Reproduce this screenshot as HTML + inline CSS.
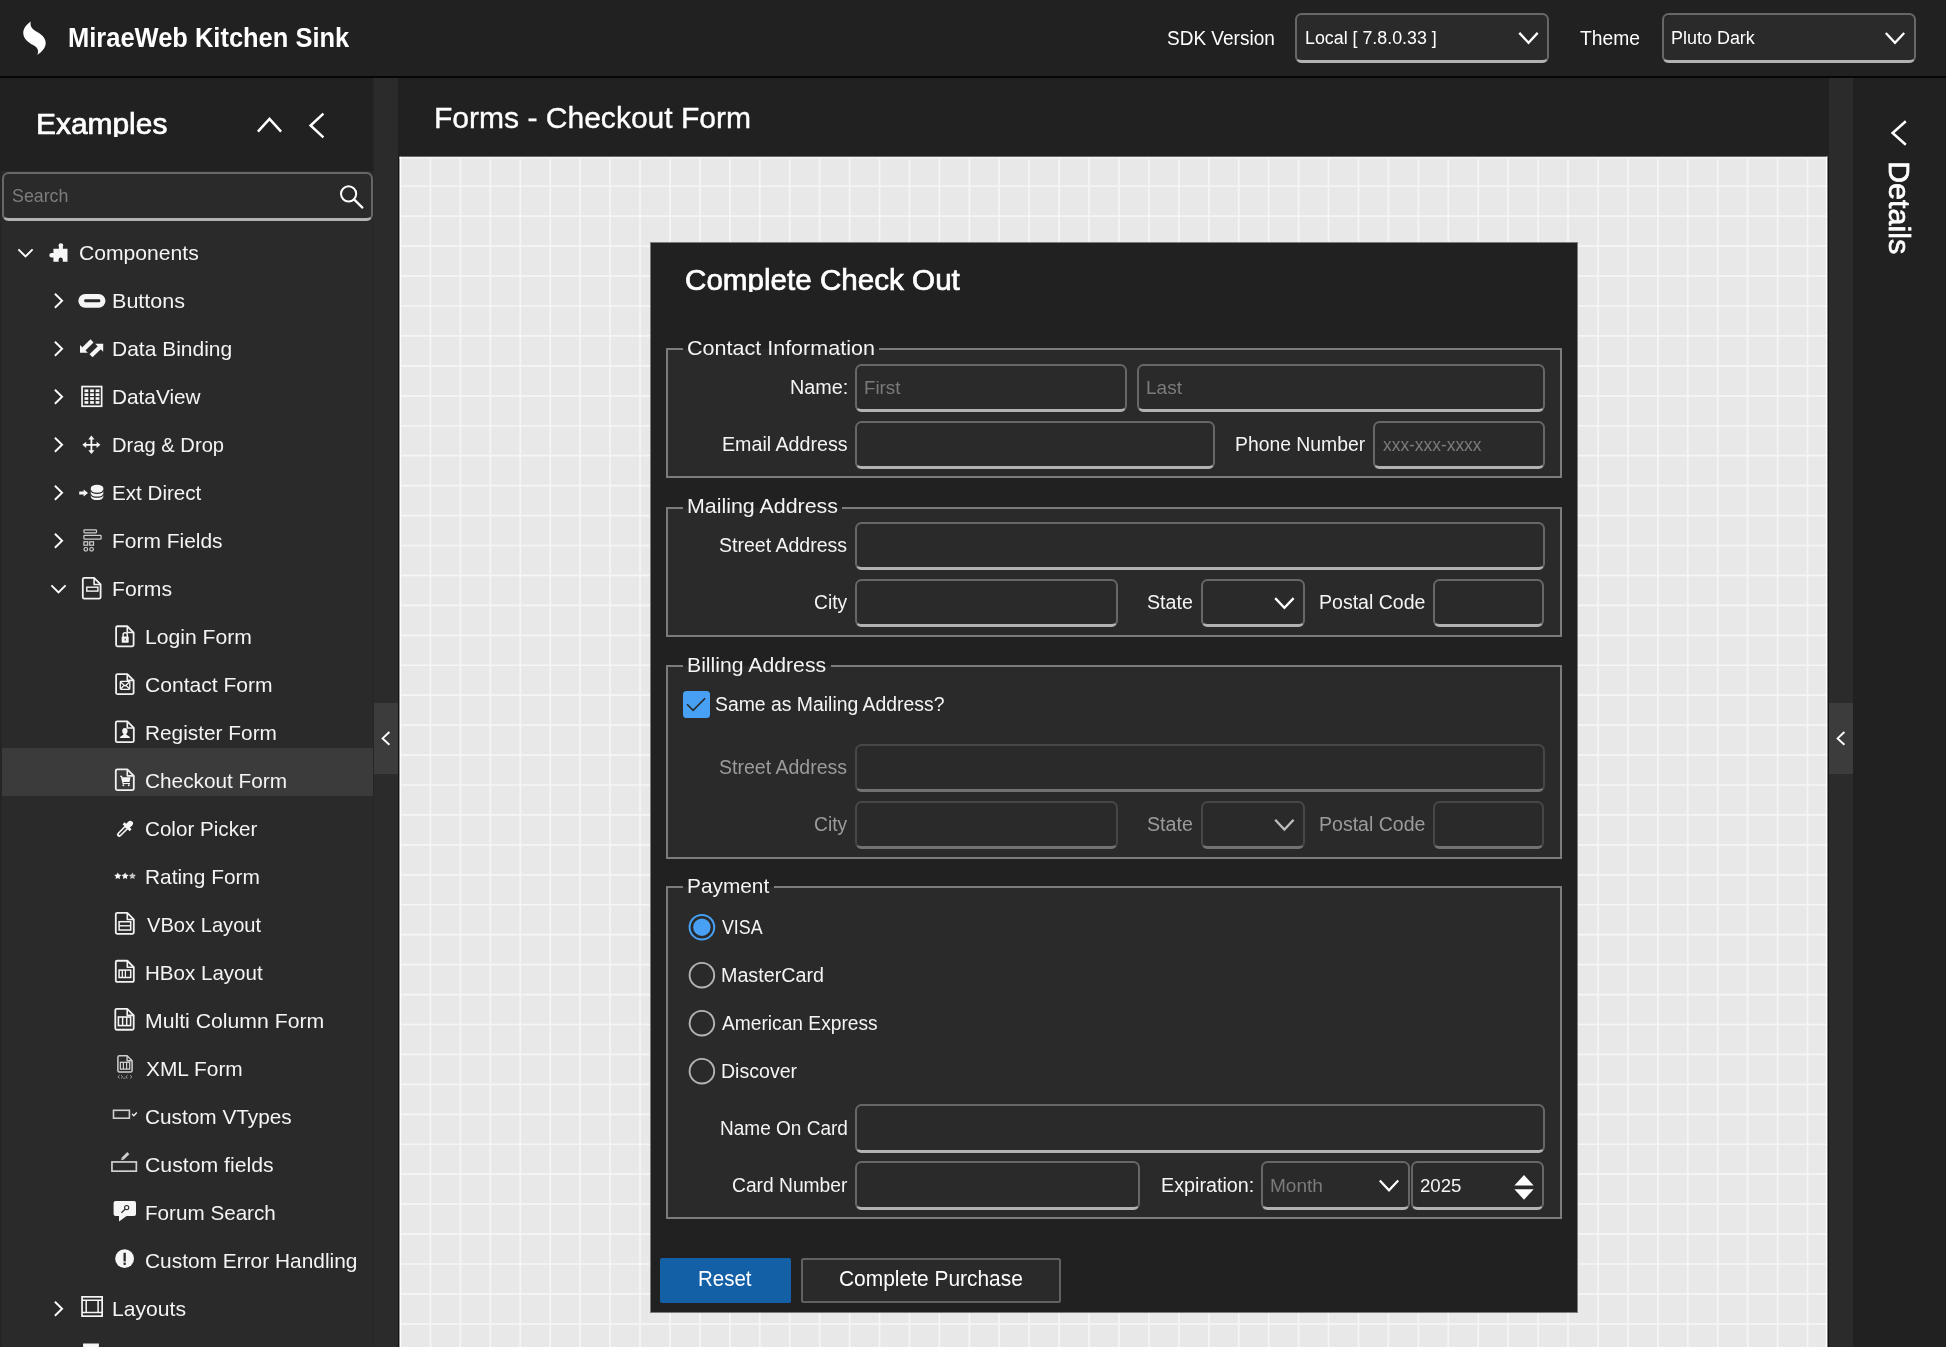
<!DOCTYPE html>
<html><head><meta charset="utf-8"><title>MiraeWeb Kitchen Sink</title>
<style>
html,body{margin:0;padding:0;background:#212121;overflow:hidden}
#r{position:relative;width:1946px;height:1347px;overflow:hidden;font-family:"Liberation Sans",sans-serif;background:#212121}
.t{position:absolute;white-space:pre;display:block;transform-origin:0 0}
.f{position:absolute;box-sizing:border-box;background:#2a2a2a;border:2px solid #676767;border-bottom:3px solid #b2b2b2;border-radius:6.5px}
svg{position:absolute;left:0;top:0}
#tx{position:absolute;left:0;top:0;width:1946px;height:1347px;will-change:transform}
</style></head><body><div id="r">
<div style="position:absolute;left:0px;top:0px;width:1946px;height:76px;background:#212121"></div>
<div style="position:absolute;left:0px;top:76px;width:1946px;height:2px;background:#060606"></div>
<div style="position:absolute;left:0px;top:78px;width:374px;height:93px;background:#212121"></div>
<div style="position:absolute;left:0px;top:171px;width:374px;height:1176px;background:#2a2a2a"></div>
<div style="position:absolute;left:0px;top:171px;width:2px;height:1176px;background:#252525"></div>
<div style="position:absolute;left:372.5px;top:78px;width:1.5px;height:1269px;background:#262626"></div>
<div style="position:absolute;left:374px;top:78px;width:24px;height:1269px;background:#2b2b2b"></div>
<div style="position:absolute;left:374.3px;top:702.8px;width:23.7px;height:71.7px;background:#3c3c3c"></div>
<div style="position:absolute;left:398px;top:78px;width:1431px;height:78.5px;background:#212121"></div>
<div style="position:absolute;left:398px;top:156.5px;width:1431px;height:1190.5px;background:#131313"></div>
<svg width="1946" height="1347" viewBox="0 0 1946 1347"><rect x="399.6" y="156.8" width="1428.7" height="1191" fill="#e8e8e8"/><path d="M430.45 157V1347M460.39 157V1347M490.32 157V1347M520.26 157V1347M550.20 157V1347M580.13 157V1347M610.07 157V1347M640.01 157V1347M669.95 157V1347M699.88 157V1347M729.82 157V1347M759.76 157V1347M789.69 157V1347M819.63 157V1347M849.57 157V1347M879.50 157V1347M909.44 157V1347M939.38 157V1347M969.32 157V1347M999.25 157V1347M1029.19 157V1347M1059.13 157V1347M1089.06 157V1347M1119.00 157V1347M1148.94 157V1347M1178.88 157V1347M1208.81 157V1347M1238.75 157V1347M1268.69 157V1347M1298.62 157V1347M1328.56 157V1347M1358.50 157V1347M1388.43 157V1347M1418.37 157V1347M1448.31 157V1347M1478.25 157V1347M1508.18 157V1347M1538.12 157V1347M1568.06 157V1347M1597.99 157V1347M1627.93 157V1347M1657.87 157V1347M1687.80 157V1347M1717.74 157V1347M1747.68 157V1347M1777.62 157V1347M1807.55 157V1347M400 186.25H1828M400 216.19H1828M400 246.12H1828M400 276.06H1828M400 306.00H1828M400 335.94H1828M400 365.87H1828M400 395.81H1828M400 425.75H1828M400 455.68H1828M400 485.62H1828M400 515.56H1828M400 545.49H1828M400 575.43H1828M400 605.37H1828M400 635.31H1828M400 665.24H1828M400 695.18H1828M400 725.12H1828M400 755.05H1828M400 784.99H1828M400 814.93H1828M400 844.86H1828M400 874.80H1828M400 904.74H1828M400 934.68H1828M400 964.61H1828M400 994.55H1828M400 1024.49H1828M400 1054.42H1828M400 1084.36H1828M400 1114.30H1828M400 1144.23H1828M400 1174.17H1828M400 1204.11H1828M400 1234.05H1828M400 1263.98H1828M400 1293.92H1828M400 1323.86H1828" stroke="#f5f5f5" stroke-width="1.7" fill="none"/><rect x="399.6" y="156.8" width="1428.7" height="2.2" fill="#f1f1f1"/><rect x="399.7" y="156.8" width="1.5" height="1191" fill="#fdfdfd"/><rect x="1825.8" y="156.8" width="1.5" height="1191" fill="#fbfbfb"/><rect x="1827.5" y="156.8" width="1.6" height="1191" fill="#111"/></svg>
<div style="position:absolute;left:1829px;top:78px;width:24px;height:1269px;background:#2b2b2b"></div>
<div style="position:absolute;left:1829.1px;top:702.8px;width:23.9px;height:71.7px;background:#3c3c3c"></div>
<div style="position:absolute;left:1853px;top:78px;width:93px;height:1269px;background:#212121"></div>
<div class="f" style="left:1295px;top:13.4px;width:253.7px;height:49.2px;border-color:#676767;border-bottom-color:#b2b2b2"></div>
<div class="f" style="left:1662px;top:13.4px;width:253.9px;height:49.2px;border-color:#676767;border-bottom-color:#b2b2b2"></div>
<div class="f" style="left:2px;top:172.3px;width:370.5px;height:49px;border-color:#676767;border-bottom-color:#b2b2b2"></div>
<div style="position:absolute;left:2px;top:748px;width:371px;height:48px;background:#3b3b3b"></div>
<div style="position:absolute;left:649.5px;top:241.5px;width:928.5px;height:1071px;background:#7e7b7a"></div>
<div style="position:absolute;left:650.5px;top:242.5px;width:926.5px;height:1069px;background:#212121"></div>
<div style="position:absolute;left:666px;top:348.4px;width:895.5px;height:129.4px;background:#2a2a2a;border:2px solid #7c7c7c;box-sizing:border-box"></div>
<div style="position:absolute;left:682.5px;top:346.4px;width:196.8px;height:6px;background:#212121"></div>
<div style="position:absolute;left:682.5px;top:349.4px;width:196.8px;height:12px;background:#2a2a2a"></div>
<div class="f" style="left:855px;top:364px;width:272px;height:48px;border-color:#676767;border-bottom-color:#b2b2b2"></div>
<div class="f" style="left:1136.5px;top:364px;width:408px;height:48px;border-color:#676767;border-bottom-color:#b2b2b2"></div>
<div class="f" style="left:855px;top:420.5px;width:360px;height:48.3px;border-color:#676767;border-bottom-color:#b2b2b2"></div>
<div class="f" style="left:1373px;top:420.5px;width:171.5px;height:48.3px;border-color:#676767;border-bottom-color:#b2b2b2"></div>
<div style="position:absolute;left:666px;top:506.6px;width:895.5px;height:130.4px;background:#2a2a2a;border:2px solid #7c7c7c;box-sizing:border-box"></div>
<div style="position:absolute;left:682.5px;top:504.6px;width:159.8px;height:6px;background:#212121"></div>
<div style="position:absolute;left:682.5px;top:507.6px;width:159.8px;height:12px;background:#2a2a2a"></div>
<div class="f" style="left:855px;top:522.4px;width:689.5px;height:48px;border-color:#676767;border-bottom-color:#b2b2b2"></div>
<div class="f" style="left:855px;top:579.2px;width:262.5px;height:48.3px;border-color:#676767;border-bottom-color:#b2b2b2"></div>
<div class="f" style="left:1201px;top:579.2px;width:103.8px;height:48.3px;border-color:#676767;border-bottom-color:#b2b2b2"></div>
<div class="f" style="left:1433.2px;top:579.2px;width:111.3px;height:48.3px;border-color:#676767;border-bottom-color:#b2b2b2"></div>
<div style="position:absolute;left:666px;top:664.8px;width:895.5px;height:194px;background:#2a2a2a;border:2px solid #7c7c7c;box-sizing:border-box"></div>
<div style="position:absolute;left:682.5px;top:662.8px;width:148px;height:6px;background:#212121"></div>
<div style="position:absolute;left:682.5px;top:665.8px;width:148px;height:12px;background:#2a2a2a"></div>
<div style="position:absolute;left:682.6px;top:690.6px;width:27.2px;height:27.3px;background:#47a0f4;border-radius:3.5px"></div>
<div class="f" style="left:855px;top:743.6px;width:689.5px;height:48.2px;border-color:#474747;border-bottom-color:#727272"></div>
<div class="f" style="left:855px;top:800.6px;width:262.5px;height:48.5px;border-color:#474747;border-bottom-color:#727272"></div>
<div class="f" style="left:1201px;top:800.6px;width:103.8px;height:48.5px;border-color:#474747;border-bottom-color:#727272"></div>
<div class="f" style="left:1433.2px;top:800.6px;width:111.3px;height:48.5px;border-color:#474747;border-bottom-color:#727272"></div>
<div style="position:absolute;left:666px;top:886.3px;width:895.5px;height:332.9px;background:#2a2a2a;border:2px solid #7c7c7c;box-sizing:border-box"></div>
<div style="position:absolute;left:682.5px;top:884.3px;width:91.8px;height:6px;background:#212121"></div>
<div style="position:absolute;left:682.5px;top:887.3px;width:91.8px;height:12px;background:#2a2a2a"></div>
<div class="f" style="left:855px;top:1104.2px;width:689.5px;height:48.6px;border-color:#676767;border-bottom-color:#b2b2b2"></div>
<div class="f" style="left:855px;top:1161px;width:285.3px;height:48.6px;border-color:#676767;border-bottom-color:#b2b2b2"></div>
<div class="f" style="left:1261.1px;top:1161px;width:148.5px;height:48.6px;border-color:#676767;border-bottom-color:#b2b2b2"></div>
<div class="f" style="left:1410.9px;top:1161px;width:133.6px;height:48.6px;border-color:#676767;border-bottom-color:#b2b2b2"></div>
<div style="position:absolute;left:660.1px;top:1257.9px;width:131.1px;height:45px;background:#1460a6;border-radius:2px"></div>
<div style="position:absolute;left:801.1px;top:1258.1px;width:260px;height:44.6px;background:#2a2a2a;border:2px solid #616161;box-sizing:border-box;border-radius:2.5px"></div>
<svg width="1946" height="1347" viewBox="0 0 1946 1347">
<polyline points="389.4,732 382.6,738.4 389.4,744.8" fill="none" stroke="#fff" stroke-width="1.9"/>
<polyline points="1844.4,732 1837.6,738.4 1844.4,744.8" fill="none" stroke="#fff" stroke-width="1.9"/>
<path d="M30.8 21.6 C26 25 23 29 23.3 33.6 C23.7 39 28 42.5 33 45 C37 47 39.6 50.2 37.2 54.8 C42 52 45.9 47.6 45.7 42.4 C45.4 37 40 33.5 35.5 31 C31.5 28.7 29.7 25.5 30.8 21.6 Z" fill="#fff"/>
<polyline points="1519.3,32.9 1528.5,42.7 1537.7,32.9" fill="none" stroke="#fff" stroke-width="2.3"/>
<polyline points="1885.8,33 1895,42.8 1904.2,33" fill="none" stroke="#fff" stroke-width="2.3"/>
<polyline points="257.9,131.7 269.5,118.9 281.1,131.7" fill="none" stroke="#fff" stroke-width="2.5"/>
<polyline points="323.4,113.7 310.6,125.5 323.4,137.3" fill="none" stroke="#fff" stroke-width="2.5"/>
<circle cx="348.6" cy="193.8" r="7.6" fill="none" stroke="#fff" stroke-width="2"/>
<path d="M354 199.4 L362.4 207.6" stroke="#fff" stroke-width="2.2" stroke-linecap="round"/>
<polyline points="18.4,249.3 25.5,256.5 32.6,249.3" fill="none" stroke="#fff" stroke-width="1.9"/>
<polyline points="54.9,293.7 62.1,300.7 54.9,307.7" fill="none" stroke="#fff" stroke-width="1.9"/>
<polyline points="54.9,341.7 62.1,348.7 54.9,355.7" fill="none" stroke="#fff" stroke-width="1.9"/>
<polyline points="54.9,389.7 62.1,396.7 54.9,403.7" fill="none" stroke="#fff" stroke-width="1.9"/>
<polyline points="54.9,437.7 62.1,444.7 54.9,451.7" fill="none" stroke="#fff" stroke-width="1.9"/>
<polyline points="54.9,485.7 62.1,492.7 54.9,499.7" fill="none" stroke="#fff" stroke-width="1.9"/>
<polyline points="54.9,533.7 62.1,540.7 54.9,547.7" fill="none" stroke="#fff" stroke-width="1.9"/>
<polyline points="51.4,585.3 58.5,592.5 65.6,585.3" fill="none" stroke="#fff" stroke-width="1.9"/>
<polyline points="54.9,1301.7 62.1,1308.7 54.9,1315.7" fill="none" stroke="#fff" stroke-width="1.9"/>
<polyline points="54.9,1349.7 62.1,1356.7 54.9,1363.7" fill="none" stroke="#fff" stroke-width="1.9"/>
<path fill="#f6f6f6" d="M53.4 248.7 H58.9 V246.6 A2.3 2.3 0 1 1 62.9 246.6 V248.7 H67.5 V261.7 H62.8 V259.6 A2.1 2.1 0 0 0 58.6 259.6 V261.7 H53.4 V257.6 H51.6 A2.3 2.3 0 1 1 51.6 253 H53.4 Z"/>
<rect x="78.3" y="293.9" width="27.2" height="13.9" rx="6.95" fill="#f6f6f6"/>
<rect x="84.2" y="299.3" width="16.1" height="2.9" rx="1.2" fill="#2a2a2a"/>
<path fill="#f6f6f6" d="M80 345 V352.8 H87.8 Z"/>
<path d="M83.4 349.4 L92 340.9" stroke="#f6f6f6" stroke-width="4.3"/>
<path fill="#f6f6f6" d="M103.2 343.8 H95.2 L103.2 351.8 Z"/>
<path d="M99.8 347.2 L91 355.8" stroke="#f6f6f6" stroke-width="4.3"/>
<rect x="82.05" y="386.55" width="19.6" height="19.7" fill="none" stroke="#f6f6f6" stroke-width="1.7"/>
<rect x="84.5" y="389.4" width="3.8" height="2.7" fill="#f6f6f6"/>
<rect x="84.5" y="393.3" width="3.8" height="2.7" fill="#f6f6f6"/>
<rect x="84.5" y="397.2" width="3.8" height="2.7" fill="#f6f6f6"/>
<rect x="84.5" y="401.1" width="3.8" height="2.7" fill="#f6f6f6"/>
<rect x="90.1" y="389.4" width="3.8" height="2.7" fill="#f6f6f6"/>
<rect x="90.1" y="393.3" width="3.8" height="2.7" fill="#f6f6f6"/>
<rect x="90.1" y="397.2" width="3.8" height="2.7" fill="#f6f6f6"/>
<rect x="90.1" y="401.1" width="3.8" height="2.7" fill="#f6f6f6"/>
<rect x="95.6" y="389.4" width="3.8" height="2.7" fill="#f6f6f6"/>
<rect x="95.6" y="393.3" width="3.8" height="2.7" fill="#f6f6f6"/>
<rect x="95.6" y="397.2" width="3.8" height="2.7" fill="#f6f6f6"/>
<rect x="95.6" y="401.1" width="3.8" height="2.7" fill="#f6f6f6"/>
<path d="M91.4 438 V451.6 M84.6 444.8 H98.2" stroke="#f6f6f6" stroke-width="1.8"/>
<path fill="#f6f6f6" d="M91.4 435.6 L94.5 439.4 H88.3 Z M91.4 454 L94.5 450.2 H88.3 Z M82.4 444.8 L86.2 441.7 V447.9 Z M100.4 444.8 L96.6 441.7 V447.9 Z"/>
<path fill="#f6f6f6" d="M79.2 491.4 H83.6 V489.4 L88 492.9 L83.6 496.4 V494.4 H79.2 Z"/>
<path fill="#f6f6f6" d="M90.8 488 A6.25 3.3 0 0 1 103.3 488 V496.8 A6.25 3.3 0 0 1 90.8 496.8 Z"/>
<path fill="none" stroke="#2a2a2a" stroke-width="1.3" d="M90.8 490.3 A6.25 3 0 0 0 103.3 490.3 M90.8 494.2 A6.25 3 0 0 0 103.3 494.2"/>
<rect x="83.9" y="529.9" width="12.6" height="3" rx=".8" fill="none" stroke="#cfcfcf" stroke-width="1.2"/>
<rect x="83.9" y="535.3" width="17.2" height="3.9" rx=".8" fill="none" stroke="#cfcfcf" stroke-width="1.2"/>
<rect x="83.9" y="541.8" width="3.8" height="3.4" fill="none" stroke="#cfcfcf" stroke-width="1.2"/>
<rect x="89.7" y="541.8" width="3.8" height="3.4" fill="none" stroke="#cfcfcf" stroke-width="1.2"/>
<circle cx="85.8" cy="549.3" r="1.8" fill="none" stroke="#cfcfcf" stroke-width="1.2"/>
<circle cx="91.6" cy="549.3" r="1.8" fill="none" stroke="#cfcfcf" stroke-width="1.2"/>
<path d="M84.3 577.95 h9.8 l6.5 6.5 v12.7 a1.5 1.5 0 0 1 -1.5 1.5 h-14.8 a1.5 1.5 0 0 1 -1.5 -1.5 v-17.7 a1.5 1.5 0 0 1 1.5 -1.5 z" fill="none" stroke="#f2f2f2" stroke-width="1.8" stroke-linejoin="round"/>
<path d="M94.1 577.95 v6.5 h6.5" fill="none" stroke="#f2f2f2" stroke-width="1.62" stroke-linejoin="round"/>
<rect x="86.8" y="587.2" width="11.1" height="3.9" fill="none" stroke="#f6f6f6" stroke-width="1.4"/>
<path d="M117.6 626.25 h9.7 l6.3 6.3 v12.3 a1.5 1.5 0 0 1 -1.5 1.5 h-14.5 a1.5 1.5 0 0 1 -1.5 -1.5 v-17.1 a1.5 1.5 0 0 1 1.5 -1.5 z" fill="none" stroke="#f2f2f2" stroke-width="1.8" stroke-linejoin="round"/>
<path d="M127.3 626.25 v6.3 h6.3" fill="none" stroke="#f2f2f2" stroke-width="1.62" stroke-linejoin="round"/>
<rect x="121.7" y="636.5" width="7" height="6.2" rx=".6" fill="#f6f6f6"/>
<path d="M123.1 637 V634.9 A2.1 2.1 0 0 1 127.3 634.9 V637" fill="none" stroke="#f6f6f6" stroke-width="1.4"/>
<rect x="124.7" y="638.6" width="1" height="2" fill="#2a2a2a"/>
<path d="M117.6 674.05 h9.7 l6.3 6.3 v12.3 a1.5 1.5 0 0 1 -1.5 1.5 h-14.5 a1.5 1.5 0 0 1 -1.5 -1.5 v-17.1 a1.5 1.5 0 0 1 1.5 -1.5 z" fill="none" stroke="#f2f2f2" stroke-width="1.8" stroke-linejoin="round"/>
<path d="M127.3 674.05 v6.3 h6.3" fill="none" stroke="#f2f2f2" stroke-width="1.62" stroke-linejoin="round"/>
<rect x="120.3" y="681.4" width="9.5" height="8" rx=".8" fill="none" stroke="#f6f6f6" stroke-width="1.3"/>
<path d="M120.8 682.2 L125.05 686 L129.3 682.2 M120.8 688.8 L123.8 685.6 M129.3 688.8 L126.3 685.6" fill="none" stroke="#f6f6f6" stroke-width="1.25"/>
<path d="M117.3 721.45 h10 l6.5 6.5 v12.7 a1.5 1.5 0 0 1 -1.5 1.5 h-15 a1.5 1.5 0 0 1 -1.5 -1.5 v-17.7 a1.5 1.5 0 0 1 1.5 -1.5 z" fill="none" stroke="#f2f2f2" stroke-width="1.8" stroke-linejoin="round"/>
<path d="M127.3 721.45 v6.5 h6.5" fill="none" stroke="#f2f2f2" stroke-width="1.62" stroke-linejoin="round"/>
<ellipse cx="124.9" cy="731" rx="2.7" ry="3.1" fill="#f6f6f6"/>
<path fill="#f6f6f6" d="M119.7 738 C120.5 735.6 123 735.8 123.8 734 H126 C126.8 735.8 129.4 735.6 130.2 738 Z"/>
<path d="M117.3 769.35 h10 l6.5 6.5 v12.7 a1.5 1.5 0 0 1 -1.5 1.5 h-15 a1.5 1.5 0 0 1 -1.5 -1.5 v-17.7 a1.5 1.5 0 0 1 1.5 -1.5 z" fill="none" stroke="#f2f2f2" stroke-width="1.8" stroke-linejoin="round"/>
<path d="M127.3 769.35 v6.5 h6.5" fill="none" stroke="#f2f2f2" stroke-width="1.62" stroke-linejoin="round"/>
<path fill="#f6f6f6" d="M120 775.8 H122 L122.5 777.3 H130.5 L129.6 782 H123.3 L123.6 783 H130 V783.9 H122.6 L120.9 776.8 H120 Z"/>
<circle cx="123.4" cy="785.3" r=".95" fill="#f6f6f6"/><circle cx="128.8" cy="785.3" r=".95" fill="#f6f6f6"/>
<path d="M119.2 834.6 L126.3 827.5" stroke="#f6f6f6" stroke-width="4.6" stroke-linecap="round"/>
<path d="M119.6 834.2 L126.2 827.6" stroke="#2a2a2a" stroke-width="1.6" stroke-linecap="round"/>
<path d="M123.6 823.2 L130.6 830.2" stroke="#f6f6f6" stroke-width="2.8"/>
<path d="M127.6 826.2 L130.3 823.5" stroke="#f6f6f6" stroke-width="5.4" stroke-linecap="round"/>
<polygon points="117.80,872.40 118.89,874.60 121.32,874.96 119.56,876.67 119.97,879.09 117.80,877.95 115.63,879.09 116.04,876.67 114.28,874.96 116.71,874.60" fill="#f6f6f6"/>
<polygon points="125.10,872.40 126.19,874.60 128.62,874.96 126.86,876.67 127.27,879.09 125.10,877.95 122.93,879.09 123.34,876.67 121.58,874.96 124.01,874.60" fill="#f6f6f6"/>
<polygon points="132.40,872.40 133.49,874.60 135.92,874.96 134.16,876.67 134.57,879.09 132.40,877.95 130.23,879.09 130.64,876.67 128.88,874.96 131.31,874.60" fill="#c4c4c4"/>
<path d="M117.3 912.95 h10 l6.5 6.5 v12.9 a1.5 1.5 0 0 1 -1.5 1.5 h-15 a1.5 1.5 0 0 1 -1.5 -1.5 v-17.9 a1.5 1.5 0 0 1 1.5 -1.5 z" fill="none" stroke="#f2f2f2" stroke-width="1.8" stroke-linejoin="round"/>
<path d="M127.3 912.95 v6.5 h6.5" fill="none" stroke="#f2f2f2" stroke-width="1.62" stroke-linejoin="round"/>
<rect x="119.1" y="921.7" width="11.6" height="8.3" fill="none" stroke="#f6f6f6" stroke-width="1.5"/>
<path d="M119.1 925.8 H130.7" stroke="#f6f6f6" stroke-width="1.4"/>
<path d="M117.3 960.75 h10 l6.5 6.5 v13.2 a1.5 1.5 0 0 1 -1.5 1.5 h-15 a1.5 1.5 0 0 1 -1.5 -1.5 v-18.2 a1.5 1.5 0 0 1 1.5 -1.5 z" fill="none" stroke="#f2f2f2" stroke-width="1.8" stroke-linejoin="round"/>
<path d="M127.3 960.75 v6.5 h6.5" fill="none" stroke="#f2f2f2" stroke-width="1.62" stroke-linejoin="round"/>
<rect x="119.1" y="970.1" width="11.6" height="7.4" fill="none" stroke="#f6f6f6" stroke-width="1.5"/>
<path d="M122.3 970.1 V977.5 M125.4 970.1 V977.5" stroke="#f6f6f6" stroke-width="1.3"/>
<path d="M116.8 1008.85 h10.4 l6.5 6.5 v12.9 a1.5 1.5 0 0 1 -1.5 1.5 h-15.4 a1.5 1.5 0 0 1 -1.5 -1.5 v-17.9 a1.5 1.5 0 0 1 1.5 -1.5 z" fill="none" stroke="#f2f2f2" stroke-width="1.8" stroke-linejoin="round"/>
<path d="M127.2 1008.85 v6.5 h6.5" fill="none" stroke="#f2f2f2" stroke-width="1.62" stroke-linejoin="round"/>
<rect x="118.4" y="1017" width="12.2" height="8.6" fill="none" stroke="#f6f6f6" stroke-width="1.6"/>
<path d="M122.6 1017 V1025.6 M126.7 1017 V1025.6" stroke="#f6f6f6" stroke-width="1.5"/>
<path d="M119.4 1055.75 h7.7 l5 5 v9.8 a1.5 1.5 0 0 1 -1.5 1.5 h-11.2 a1.5 1.5 0 0 1 -1.5 -1.5 v-13.3 a1.5 1.5 0 0 1 1.5 -1.5 z" fill="none" stroke="#cfcfcf" stroke-width="1.5" stroke-linejoin="round"/>
<path d="M127.1 1055.75 v5 h5" fill="none" stroke="#cfcfcf" stroke-width="1.35" stroke-linejoin="round"/>
<rect x="120.4" y="1062.3" width="9.3" height="6.8" fill="none" stroke="#cfcfcf" stroke-width="1.3"/>
<path d="M123.4 1062.3 V1069.1 M126.6 1062.3 V1069.1" stroke="#cfcfcf" stroke-width="1.2"/>
<path d="M119.6 1075.2 L117.9 1076.8 L119.6 1078.4 M121 1075.2 L122.7 1076.8 L121 1078.4 M127.5 1075.2 L125.8 1076.8 L127.5 1078.4 M130.2 1075.2 L131.9 1076.8 L130.2 1078.4 M123.4 1078.2 H125.4" fill="none" stroke="#a8a8a8" stroke-width=".9"/>
<rect x="113.5" y="1110.3" width="15.9" height="7.9" fill="none" stroke="#cfcfcf" stroke-width="1.6"/>
<path d="M132 1113.9 L133.8 1115.7 L136.8 1112.5" fill="none" stroke="#f6f6f6" stroke-width="1.3"/>
<rect x="111.95" y="1161.95" width="24.4" height="9.2" fill="none" stroke="#cfcfcf" stroke-width="1.7"/>
<path d="M122.6 1158.8 L128.3 1153.1" stroke="#cfcfcf" stroke-width="2.9"/>
<path fill="#cfcfcf" d="M121.1 1160.3 L121.6 1157.8 L123.6 1159.8 Z"/>
<path fill="#f6f6f6" d="M115.6 1200.9 H134 A2 2 0 0 1 136 1202.9 V1214 A2 2 0 0 1 134 1216 H126.6 L119 1221.4 V1216 H115.6 A2 2 0 0 1 113.6 1214 V1202.9 A2 2 0 0 1 115.6 1200.9 Z"/>
<circle cx="126.7" cy="1207.6" r="2.1" fill="none" stroke="#2a2a2a" stroke-width="1.1"/>
<path d="M125.1 1209.2 L121.4 1212.7" stroke="#2a2a2a" stroke-width="1.2"/>
<circle cx="124.6" cy="1258.7" r="9.4" fill="#f6f6f6"/>
<rect x="123.5" y="1252.8" width="2.3" height="8.7" fill="#2a2a2a"/><rect x="123.5" y="1262.6" width="2.3" height="2.3" fill="#2a2a2a"/>
<rect x="82.05" y="1296.85" width="20.1" height="19.3" fill="none" stroke="#f6f6f6" stroke-width="1.7"/>
<path d="M82 1300.3 H102.2 M82 1312.6 H102.2 M86.2 1300.3 V1312.6 M98.1 1300.3 V1312.6" stroke="#f6f6f6" stroke-width="1.5"/>
<rect x="83.9" y="1344.3" width="14.2" height="18" fill="none" stroke="#f6f6f6" stroke-width="1.6"/>
<rect x="83.9" y="1344.3" width="14.2" height="4" fill="#f6f6f6"/>
<polyline points="1905.8,121.2 1892.6,133 1905.8,144.8" fill="none" stroke="#fff" stroke-width="2.5"/>
<polyline points="1275.2,598.1 1284.4,607.9 1293.6,598.1" fill="none" stroke="#fff" stroke-width="2.3"/>
<polyline points="687.1,704.3 693.1,710.3 705.1,698.3" fill="none" stroke="#262626" stroke-width="1.6"/>
<polyline points="1275.2,819.7 1284.4,829.5 1293.6,819.7" fill="none" stroke="#bdbdbd" stroke-width="2.3"/>
<circle cx="701.9" cy="927.2" r="12.3" fill="none" stroke="#47a0f4" stroke-width="2"/>
<circle cx="701.9" cy="927.2" r="8.7" fill="#47a0f4"/>
<circle cx="701.9" cy="975.2" r="12.3" fill="none" stroke="#b4b4b4" stroke-width="1.9"/>
<circle cx="701.9" cy="1023.2" r="12.3" fill="none" stroke="#b4b4b4" stroke-width="1.9"/>
<circle cx="701.9" cy="1071.2" r="12.3" fill="none" stroke="#b4b4b4" stroke-width="1.9"/>
<polyline points="1379.8,1180.5 1389,1190.3 1398.2,1180.5" fill="none" stroke="#fff" stroke-width="2.3"/>
<path d="M1514.4 1185.6 L1524 1175 L1533.6 1185.6 Z" fill="#fff"/>
<path d="M1514.4 1189.2 L1524 1199.8 L1533.6 1189.2 Z" fill="#fff"/>
</svg>
<div id="tx">
<span class="t " style="left:68.24px;top:25.34px;font-size:27px;line-height:27px;transform:scaleX(0.9435);color:#fff;font-weight:bold;">MiraeWeb Kitchen Sink</span>
<span class="t " style="left:1167.14px;top:28.89px;font-size:19.5px;line-height:19.5px;transform:scaleX(0.9750);color:#fff;">SDK Version</span>
<span class="t " style="left:1304.97px;top:28.96px;font-size:18px;line-height:18px;transform:scaleX(0.9900);color:#fff;">Local [ 7.8.0.33 ]</span>
<span class="t " style="left:1579.81px;top:28.59px;font-size:19.5px;line-height:19.5px;transform:scaleX(0.9887);color:#fff;">Theme</span>
<span class="t " style="left:1671.06px;top:28.96px;font-size:18px;line-height:18px;transform:scaleX(0.9975);color:#fff;">Pluto Dark</span>
<div style="position:absolute;left:0;top:78px;width:374px;height:58.7px;overflow:hidden">
<span class="t " style="left:36.21px;top:31.11px;font-size:30px;line-height:30px;transform:scaleX(0.9973);color:#fff;-webkit-text-stroke:0.7px #fff;">Examples</span>
</div>
<span class="t " style="left:11.50px;top:187.14px;font-size:18.5px;line-height:18.5px;transform:scaleX(0.9627);color:#7d7d7d;">Search</span>
<span class="t " style="left:79.34px;top:242.32px;font-size:21px;line-height:21px;transform:scaleX(1.0061);color:#f4f4f4;">Components</span>
<span class="t " style="left:111.68px;top:290.32px;font-size:21px;line-height:21px;transform:scaleX(1.0265);color:#f4f4f4;">Buttons</span>
<span class="t " style="left:111.72px;top:338.32px;font-size:21px;line-height:21px;transform:scaleX(0.9993);color:#f4f4f4;">Data Binding</span>
<span class="t " style="left:111.74px;top:386.32px;font-size:21px;line-height:21px;transform:scaleX(0.9899);color:#f4f4f4;">DataView</span>
<span class="t " style="left:111.79px;top:434.32px;font-size:21px;line-height:21px;transform:scaleX(0.9603);color:#f4f4f4;">Drag &amp; Drop</span>
<span class="t " style="left:111.75px;top:482.32px;font-size:21px;line-height:21px;transform:scaleX(0.9815);color:#f4f4f4;">Ext Direct</span>
<span class="t " style="left:111.72px;top:530.32px;font-size:21px;line-height:21px;transform:scaleX(0.9976);color:#f4f4f4;">Form Fields</span>
<span class="t " style="left:111.71px;top:578.32px;font-size:21px;line-height:21px;transform:scaleX(1.0084);color:#f4f4f4;">Forms</span>
<span class="t " style="left:144.81px;top:626.32px;font-size:21px;line-height:21px;transform:scaleX(1.0066);color:#f4f4f4;">Login Form</span>
<span class="t " style="left:145.45px;top:674.32px;font-size:21px;line-height:21px;transform:scaleX(1.0028);color:#f4f4f4;">Contact Form</span>
<span class="t " style="left:144.83px;top:722.32px;font-size:21px;line-height:21px;transform:scaleX(0.9916);color:#f4f4f4;">Register Form</span>
<span class="t " style="left:145.46px;top:770.32px;font-size:21px;line-height:21px;transform:scaleX(0.9899);color:#f4f4f4;">Checkout Form</span>
<span class="t " style="left:145.47px;top:818.32px;font-size:21px;line-height:21px;transform:scaleX(0.9824);color:#f4f4f4;">Color Picker</span>
<span class="t " style="left:144.83px;top:866.32px;font-size:21px;line-height:21px;transform:scaleX(0.9941);color:#f4f4f4;">Rating Form</span>
<span class="t " style="left:146.50px;top:914.32px;font-size:21px;line-height:21px;transform:scaleX(0.9583);color:#f4f4f4;">VBox Layout</span>
<span class="t " style="left:144.86px;top:962.32px;font-size:21px;line-height:21px;transform:scaleX(0.9785);color:#f4f4f4;">HBox Layout</span>
<span class="t " style="left:144.80px;top:1010.32px;font-size:21px;line-height:21px;transform:scaleX(1.0103);color:#f4f4f4;">Multi Column Form</span>
<span class="t " style="left:146.08px;top:1058.32px;font-size:21px;line-height:21px;transform:scaleX(0.9953);color:#f4f4f4;">XML Form</span>
<span class="t " style="left:145.46px;top:1106.32px;font-size:21px;line-height:21px;transform:scaleX(0.9899);color:#f4f4f4;">Custom VTypes</span>
<span class="t " style="left:145.44px;top:1154.32px;font-size:21px;line-height:21px;transform:scaleX(1.0114);color:#f4f4f4;">Custom fields</span>
<span class="t " style="left:144.85px;top:1202.32px;font-size:21px;line-height:21px;transform:scaleX(0.9831);color:#f4f4f4;">Forum Search</span>
<span class="t " style="left:145.46px;top:1250.32px;font-size:21px;line-height:21px;transform:scaleX(0.9945);color:#f4f4f4;">Custom Error Handling</span>
<span class="t " style="left:111.71px;top:1298.32px;font-size:21px;line-height:21px;transform:scaleX(1.0058);color:#f4f4f4;">Layouts</span>
<span class="t " style="left:111.81px;top:1346.32px;font-size:21px;line-height:21px;transform:scaleX(0.9475);color:#f4f4f4;">Panels</span>
<span class="t " style="left:434.20px;top:102.93px;font-size:29.5px;line-height:29.5px;transform:scaleX(1.0181);color:#fff;-webkit-text-stroke:0.35px #fff;">Forms - Checkout Form</span>
<span class="t" style="left:1914.10px;top:160.96px;font-size:30px;line-height:30px;color:#fff;-webkit-text-stroke:0.7px #fff;transform-origin:0 0;transform:rotate(90deg) scaleX(1.0181)">Details</span>
<div style="position:absolute;left:650px;top:242px;width:900px;height:49.8px;overflow:hidden">
<span class="t " style="left:35.42px;top:22.80px;font-size:30px;line-height:30px;transform:scaleX(0.9870);color:#fff;-webkit-text-stroke:0.7px #fff;">Complete Check Out</span>
</div>
<span class="t " style="left:687.22px;top:337.02px;font-size:21px;line-height:21px;transform:scaleX(1.0253);color:#f4f4f4;">Contact Information</span>
<span class="t " style="left:789.92px;top:377.69px;font-size:19.5px;line-height:19.5px;transform:scaleX(1.0146);color:#f4f4f4;">Name:</span>
<span class="t " style="left:864.20px;top:378.76px;font-size:18px;line-height:18px;transform:scaleX(1.0394);color:#7b7b7b;">First</span>
<span class="t " style="left:1145.68px;top:378.76px;font-size:18px;line-height:18px;transform:scaleX(1.0557);color:#7b7b7b;">Last</span>
<span class="t " style="left:721.83px;top:434.79px;font-size:19.5px;line-height:19.5px;transform:scaleX(1.0077);color:#f4f4f4;">Email Address</span>
<span class="t " style="left:1234.65px;top:434.79px;font-size:19.5px;line-height:19.5px;transform:scaleX(0.9924);color:#f4f4f4;">Phone Number</span>
<span class="t " style="left:1383.23px;top:435.56px;font-size:18px;line-height:18px;transform:scaleX(0.9655);color:#7b7b7b;">xxx-xxx-xxxx</span>
<span class="t " style="left:686.59px;top:495.22px;font-size:21px;line-height:21px;transform:scaleX(1.0182);color:#f4f4f4;">Mailing Address</span>
<span class="t " style="left:719.32px;top:536.29px;font-size:19.5px;line-height:19.5px;transform:scaleX(1.0011);color:#f4f4f4;">Street Address</span>
<span class="t " style="left:813.64px;top:593.09px;font-size:19.5px;line-height:19.5px;transform:scaleX(0.9857);color:#f4f4f4;">City</span>
<span class="t " style="left:1147.42px;top:593.09px;font-size:19.5px;line-height:19.5px;transform:scaleX(1.0074);color:#f4f4f4;">State</span>
<span class="t " style="left:1319.44px;top:593.09px;font-size:19.5px;line-height:19.5px;transform:scaleX(1.0016);color:#f4f4f4;">Postal Code</span>
<span class="t " style="left:686.60px;top:653.52px;font-size:21px;line-height:21px;transform:scaleX(1.0100);color:#f4f4f4;">Billing Address</span>
<span class="t " style="left:715.13px;top:694.89px;font-size:19.5px;line-height:19.5px;transform:scaleX(0.9938);color:#f4f4f4;">Same as Mailing Address?</span>
<span class="t " style="left:719.32px;top:757.89px;font-size:19.5px;line-height:19.5px;transform:scaleX(1.0011);color:#9b9b9b;">Street Address</span>
<span class="t " style="left:813.64px;top:814.59px;font-size:19.5px;line-height:19.5px;transform:scaleX(0.9857);color:#9b9b9b;">City</span>
<span class="t " style="left:1147.42px;top:814.59px;font-size:19.5px;line-height:19.5px;transform:scaleX(1.0074);color:#9b9b9b;">State</span>
<span class="t " style="left:1319.44px;top:814.59px;font-size:19.5px;line-height:19.5px;transform:scaleX(1.0016);color:#9b9b9b;">Postal Code</span>
<span class="t " style="left:686.63px;top:875.12px;font-size:21px;line-height:21px;transform:scaleX(0.9918);color:#f4f4f4;">Payment</span>
<span class="t " style="left:722.30px;top:917.69px;font-size:19.5px;line-height:19.5px;transform:scaleX(0.9129);color:#f4f4f4;">VISA</span>
<span class="t " style="left:720.72px;top:965.69px;font-size:19.5px;line-height:19.5px;transform:scaleX(1.0105);color:#f4f4f4;">MasterCard</span>
<span class="t " style="left:722.30px;top:1013.69px;font-size:19.5px;line-height:19.5px;transform:scaleX(0.9838);color:#f4f4f4;">American Express</span>
<span class="t " style="left:720.74px;top:1061.69px;font-size:19.5px;line-height:19.5px;transform:scaleX(1.0027);color:#f4f4f4;">Discover</span>
<span class="t " style="left:719.88px;top:1118.99px;font-size:19.5px;line-height:19.5px;transform:scaleX(0.9758);color:#f4f4f4;">Name On Card</span>
<span class="t " style="left:731.54px;top:1175.69px;font-size:19.5px;line-height:19.5px;transform:scaleX(0.9859);color:#f4f4f4;">Card Number</span>
<span class="t " style="left:1161.42px;top:1175.69px;font-size:19.5px;line-height:19.5px;transform:scaleX(1.0121);color:#f4f4f4;">Expiration:</span>
<span class="t " style="left:1269.88px;top:1176.56px;font-size:18px;line-height:18px;transform:scaleX(1.0585);color:#7b7b7b;">Month</span>
<span class="t " style="left:1419.77px;top:1176.56px;font-size:18px;line-height:18px;transform:scaleX(1.0356);color:#f4f4f4;">2025</span>
<span class="t " style="left:698.16px;top:1268.88px;font-size:21.4px;line-height:21.4px;transform:scaleX(0.9567);color:#fff;">Reset</span>
<span class="t " style="left:839.25px;top:1268.88px;font-size:21.4px;line-height:21.4px;transform:scaleX(0.9787);color:#fff;">Complete Purchase</span>
</div>
</div></body></html>
